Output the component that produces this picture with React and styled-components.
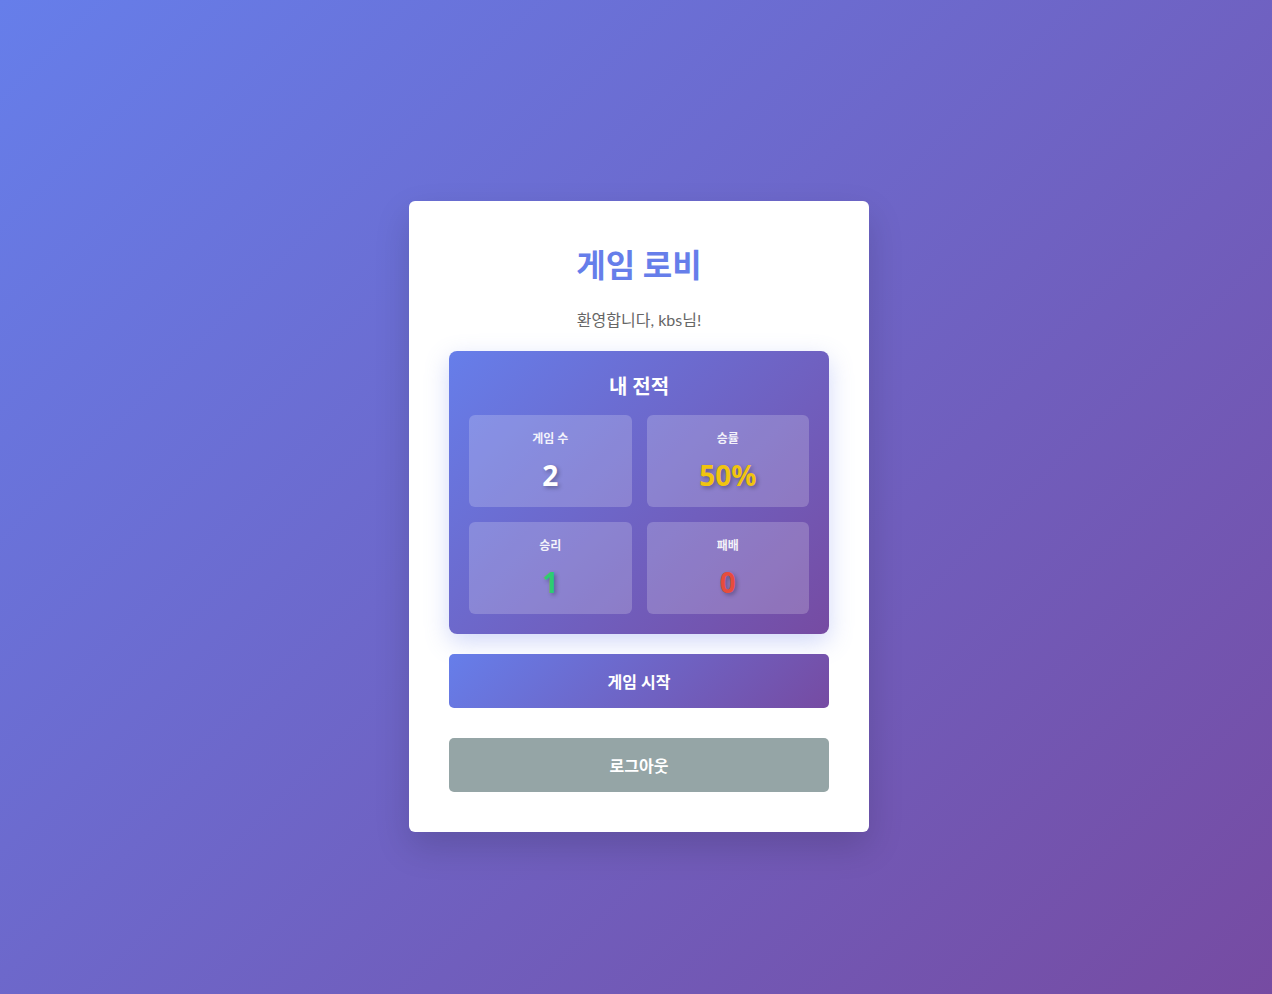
import React from 'react';
import styled, { createGlobalStyle } from 'styled-components';

const STATS = [
  { id: 1, label: '게임 수', value: '2', color: '#ffffff' },
  { id: 2, label: '승률', value: '50%', color: '#f1c40f' },
  { id: 3, label: '승리', value: '1', color: '#2ecc71' },
  { id: 4, label: '패배', value: '0', color: '#e74c3c' },
];

const GlobalStyle = createGlobalStyle`
  * {
    box-sizing: border-box;
  }
  body {
    margin: 0;
    font-family: Lato, 'Noto Sans CJK KR', sans-serif;
  }
`;

const App = () => {
  return (
    <>
      <GlobalStyle />
      <Page>
        <Card>
          <Title>게임 로비</Title>
          <Welcome>환영합니다, kbs님!</Welcome>
          <StatsBox>
            <StatsTitle>내 전적</StatsTitle>
            <StatsGrid>
              {STATS.map(item => (
                <StatItem key={item.id}>
                  <StatLabel>{item.label}</StatLabel>
                  <StatValue $color={item.color}>{item.value}</StatValue>
                </StatItem>
              ))}
            </StatsGrid>
          </StatsBox>
          <StartButton>게임 시작</StartButton>
          <LogoutButton>로그아웃</LogoutButton>
        </Card>
      </Page>
    </>
  );
};
export default App;

const Page = styled.div`
  display: flex;
  justify-content: center;
  align-items: center;
  min-height: 100vh;
  padding: 38px 0 0 6px;
  background: linear-gradient(135deg, #667eea 0%, #764ba2 100%);
`;

const Card = styled.div`
  display: flex;
  flex-direction: column;
  width: 460px;
  padding: 40px;
  background: #fff;
  border-radius: 6px;
  box-shadow: 0 15px 35px rgba(0, 0, 0, 0.15);
`;

const Title = styled.h1`
  margin: 0;
  font-size: 32px;
  line-height: 48px;
  font-weight: 700;
  color: #667eea;
  text-align: center;
`;

const Welcome = styled.p`
  margin: 20px 0 0;
  font-size: 16px;
  line-height: 22px;
  color: #666;
  text-align: center;
`;

const StatsBox = styled.div`
  margin-top: 20px;
  padding: 20px;
  border-radius: 8px;
  background: linear-gradient(135deg, #667eea 0%, #764ba2 100%);
  box-shadow: 0 8px 25px rgba(102, 126, 234, 0.3);
  color: #fff;
`;

const StatsTitle = styled.h3`
  margin: 0;
  font-size: 20px;
  line-height: 30px;
  font-weight: 700;
  text-align: center;
`;

const StatsGrid = styled.div`
  display: grid;
  grid-template-columns: 1fr 1fr;
  gap: 15px;
  margin-top: 14px;
`;

const StatItem = styled.div`
  display: flex;
  flex-direction: column;
  align-items: center;
  height: 92px;
  padding: 15px;
  border-radius: 6px;
  background: rgba(255, 255, 255, 0.2);
`;

const StatLabel = styled.div`
  font-size: 12px;
  line-height: 18px;
  font-weight: 600;
  opacity: 0.9;
`;

const StatValue = styled.div`
  margin-top: 10px;
  font-family: 'Open Sans', 'Noto Sans CJK KR', sans-serif;
  font-size: 28px;
  line-height: 34px;
  font-weight: 700;
  color: ${({ $color }) => $color};
  text-shadow: 2px 2px 4px rgba(0, 0, 0, 0.3);
`;

const Button = styled.button`
  height: 54px;
  border: none;
  border-radius: 5px;
  font-family: Lato, 'Noto Sans CJK KR', sans-serif;
  font-size: 16px;
  font-weight: 700;
  color: #fff;
  cursor: pointer;
`;

const StartButton = styled(Button)`
  margin-top: 20px;
  background: linear-gradient(135deg, #667eea 0%, #764ba2 100%);
`;

const LogoutButton = styled(Button)`
  margin-top: 30px;
  background: #95a5a6;
`;
